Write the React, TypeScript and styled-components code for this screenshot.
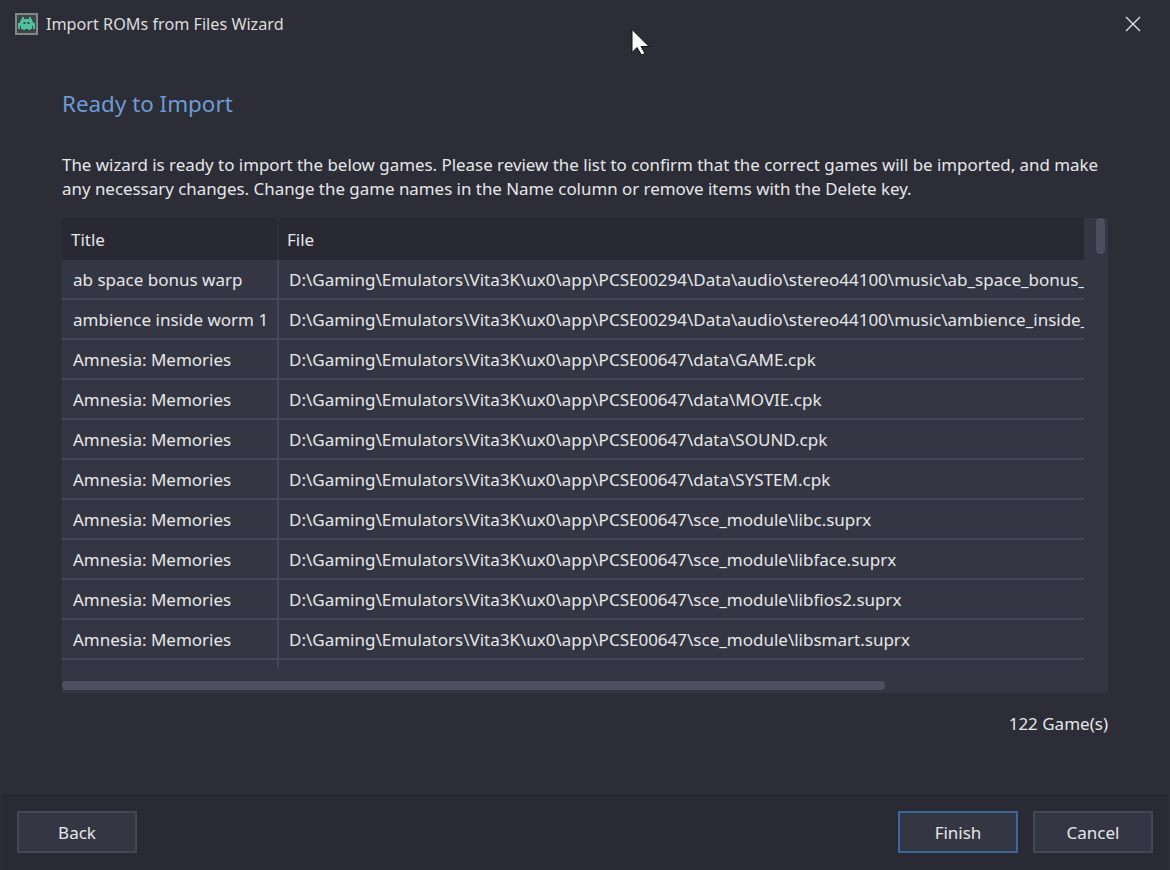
import { FC } from 'react';
import styled, { createGlobalStyle } from 'styled-components';

const GlobalStyle = createGlobalStyle`
  html, body {
    margin: 0;
    padding: 0;
    background: #2b2c36;
  }
  * {
    box-sizing: border-box;
  }
`;

const Window = styled.div`
  position: relative;
  display: flex;
  flex-direction: column;
  width: 1170px;
  height: 870px;
  overflow: hidden;
  background: #2c2d37;
  color: #e6e6e8;
  font-family: 'Noto Sans', 'Open Sans', sans-serif;
  font-size: 17px;
`;

const TitleBar = styled.div`
  display: flex;
  align-items: center;
  height: 48px;
  padding: 0 29px 0 15px;
  flex-shrink: 0;
`;

const AppIcon = styled.svg`
  width: 23px;
  height: 22px;
  flex-shrink: 0;
  margin-right: 8px;
`;

const WindowTitle = styled.div`
  flex: 1;
  font-size: 16.2px;
  color: #dcdcde;
`;

const CloseIcon = styled.svg`
  width: 16px;
  height: 16px;
`;

const Content = styled.div`
  flex: 1;
  display: flex;
  flex-direction: column;
  padding: 38px 62px 0;
  min-height: 0;
`;

const Heading = styled.h1`
  margin: 0;
  font-size: 22.4px;
  font-weight: 400;
  line-height: 36px;
  color: #6c9bd2;
`;

const Description = styled.p`
  margin: 31px 0 17px;
  font-size: 16.9px;
  line-height: 24px;
  color: #e6e6e8;
`;

const Table = styled.div`
  position: relative;
  display: flex;
  flex-direction: column;
  width: 1046px;
  height: 475px;
  background: #343643;
  overflow: hidden;
`;

const TableBody = styled.div`
  width: 1022px;
  height: 450px;
  overflow: hidden;
  flex-shrink: 0;
`;

const Row = styled.div<{ $header?: boolean }>`
  display: grid;
  grid-template-columns: 217px 1fr;
  height: ${({ $header }) => ($header ? '42px' : '40px')};
  background: ${({ $header }) => ($header ? '#282932' : 'transparent')};
  border-bottom: ${({ $header }) => ($header ? 'none' : '2px solid #454756')};
  align-items: stretch;
`;

const Cell = styled.div<{ $first?: boolean }>`
  display: flex;
  align-items: center;
  padding-left: ${({ $first }) => ($first ? '11px' : '10px')};
  overflow: hidden;
  white-space: nowrap;
  border-right: ${({ $first }) => ($first ? '2px solid #454756' : 'none')};
`;

const HeaderCell = styled.div<{ $first?: boolean }>`
  display: flex;
  align-items: center;
  padding-left: ${({ $first }) => ($first ? '9px' : '8px')};
  border-right: ${({ $first }) => ($first ? '2px solid #2f303a' : 'none')};
  color: #e6e6e8;
`;

const VerticalThumb = styled.div`
  position: absolute;
  top: 0;
  right: 3px;
  width: 9px;
  height: 36px;
  border-radius: 4px;
  background: #4d4f5f;
`;

const HorizontalThumb = styled.div`
  width: 823px;
  height: 9px;
  margin-top: 13px;
  border-radius: 4px;
  background: #4d4f5f;
`;

const GameCount = styled.div`
  margin-top: 19px;
  text-align: right;
  line-height: 24px;
`;

const Footer = styled.div`
  display: flex;
  align-items: center;
  justify-content: space-between;
  height: 75px;
  flex-shrink: 0;
  margin: 0 2px;
  padding: 0 15px 2px;
  background: #292a33;
  border-top: 1px solid #24252d;
`;

const ButtonGroup = styled.div`
  display: flex;
  gap: 15px;
`;

const Button = styled.button<{ $primary?: boolean }>`
  width: 120px;
  height: 42px;
  padding: 0;
  background: #343643;
  border: 2px solid ${({ $primary }) => ($primary ? '#3d6699' : '#454756')};
  border-radius: 0;
  color: #e6e6e8;
  font-family: inherit;
  font-size: 17px;
`;

const Cursor = styled.svg`
  position: absolute;
  left: 630px;
  top: 28px;
  width: 21px;
  height: 30px;
`;

const base = 'D:\\Gaming\\Emulators\\Vita3K\\ux0\\app';
const music = `${base}\\PCSE00294\\Data\\audio\\stereo44100\\music`;
const amnesia = `${base}\\PCSE00647`;

const rows = [
  { title: 'ab space bonus warp', file: `${music}\\ab_space_bonus_warp.at9` },
  { title: 'ambience inside worm 1', file: `${music}\\ambience_inside_worm_1.at9` },
  { title: 'Amnesia: Memories', file: `${amnesia}\\data\\GAME.cpk` },
  { title: 'Amnesia: Memories', file: `${amnesia}\\data\\MOVIE.cpk` },
  { title: 'Amnesia: Memories', file: `${amnesia}\\data\\SOUND.cpk` },
  { title: 'Amnesia: Memories', file: `${amnesia}\\data\\SYSTEM.cpk` },
  { title: 'Amnesia: Memories', file: `${amnesia}\\sce_module\\libc.suprx` },
  { title: 'Amnesia: Memories', file: `${amnesia}\\sce_module\\libface.suprx` },
  { title: 'Amnesia: Memories', file: `${amnesia}\\sce_module\\libfios2.suprx` },
  { title: 'Amnesia: Memories', file: `${amnesia}\\sce_module\\libsmart.suprx` },
  { title: '', file: '' },
];

const App: FC = () => (
  <>
    <GlobalStyle />
    <Window>
      <TitleBar>
        <AppIcon viewBox="0 0 23 22">
          <rect x="1" y="1" width="21" height="20" fill="#3d4747" stroke="#85888a" strokeWidth="2" />
          <path
            d="M7 4h2v2h5V4h2v2h1v2h1v2h2v6h-2v-3h-1v3h-2v1h-2v-1h-3v1H8v-1H6v-3H5v3H3v-6h2V8h1V6h1z"
            fill="#4fbf9e"
          />
          <rect x="8.5" y="9" width="2" height="2" fill="#3d4747" />
          <rect x="12.5" y="9" width="2" height="2" fill="#3d4747" />
        </AppIcon>
        <WindowTitle>Import ROMs from Files Wizard</WindowTitle>
        <CloseIcon viewBox="0 0 16 16">
          <path d="M1 1l14 14M15 1L1 15" stroke="#e0e0e2" strokeWidth="1.4" fill="none" />
        </CloseIcon>
      </TitleBar>
      <Content>
        <Heading>Ready to Import</Heading>
        <Description>
          The wizard is ready to import the below games. Please review the list to confirm that the correct games will
          be imported, and make any necessary changes. Change the game names in the Name column or remove items with the
          Delete key.
        </Description>
        <Table>
          <TableBody>
            <Row $header>
              <HeaderCell $first>Title</HeaderCell>
              <HeaderCell>File</HeaderCell>
            </Row>
            {rows.map((row, index) => (
              <Row key={index}>
                <Cell $first>{row.title}</Cell>
                <Cell>{row.file}</Cell>
              </Row>
            ))}
          </TableBody>
          <VerticalThumb />
          <HorizontalThumb />
        </Table>
        <GameCount>122 Game(s)</GameCount>
      </Content>
      <Footer>
        <Button>Back</Button>
        <ButtonGroup>
          <Button $primary>Finish</Button>
          <Button>Cancel</Button>
        </ButtonGroup>
      </Footer>
      <Cursor viewBox="0 0 21 30">
        <path d="M2 1.5v23l5-5 4.5 7.5 3.5-1.5-4-7h8z" fill="#fff" stroke="#111" strokeWidth="1" />
      </Cursor>
    </Window>
  </>
);

export default App;
